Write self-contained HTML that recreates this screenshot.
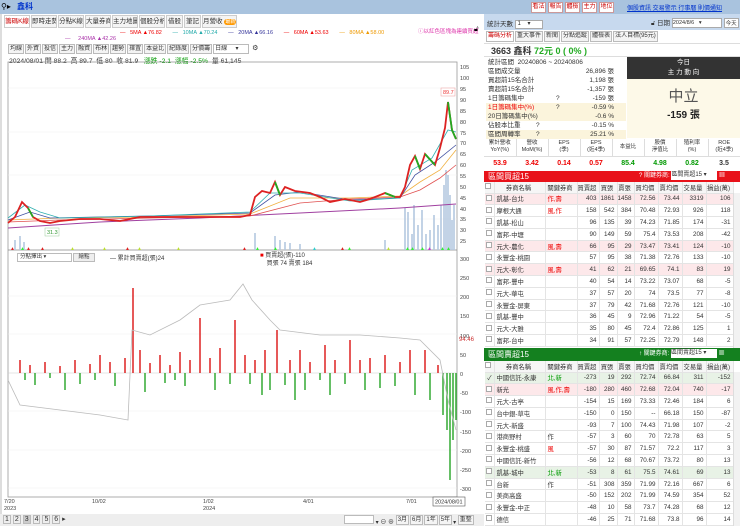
<!DOCTYPE html>
<html><head><meta charset="utf-8"><style>
*{margin:0;padding:0;box-sizing:border-box}
body{width:740px;height:526px;overflow:hidden;background:#fff;font-family:"Liberation Sans","Noto Sans CJK TC",sans-serif;font-size:7px;color:#333;position:relative;white-space:nowrap}
.a{position:absolute}
.tab{position:absolute;top:15px;height:13px;width:26px;overflow:hidden;border:1px solid #ccc;background:#f4f4f4;font-size:6.5px;line-height:11px;text-align:center}
.tb{display:inline-block;border:1px solid #bbb;background:#f4f4f4;padding:0 1px;height:10px;line-height:8px;font-size:6px;margin-right:1px;overflow:hidden;vertical-align:top}
.btn{position:absolute;top:2px;width:15px;border:1px solid #c99;background:#fff;color:#c00;height:11px;line-height:9px;font-size:6px;text-align:center;overflow:hidden}
table{border-collapse:collapse;table-layout:fixed}
.t td{height:11.8px;border-right:1px solid #e4e4e4;border-bottom:1px solid #e4e4e4;font-size:6.3px;text-align:right;padding-right:2px;white-space:nowrap;overflow:hidden}
.t td.l{text-align:left;padding-left:2px}
.t tr.h td{background:#f6f6f6;text-align:center;height:11px}
.t tr.p td{background:#fde8ea}
.t tr.g td{background:#e8f2e6}
.r{color:#e00}.gr{color:#090}
.cb{display:inline-block;width:6px;height:6px;border:1px solid #aaa;background:#fff}
.sr{position:absolute;left:486px;width:140px;height:9px;font-size:6.5px;line-height:9px;padding:0 2px;overflow:hidden}
.sr .q{position:absolute;left:70px}
.sr .v{position:absolute;right:12px}
</style></head><body>
<div class="a" style="left:0;top:0;width:740px;height:14px;background:#a9c3de"></div>
<div class="a" style="left:1px;top:2px;font-size:8px;color:#000">⚲▸</div>
<div class="a" style="left:17px;top:1px;font-size:8px;color:#0033cc;font-weight:bold">鑫科</div>
<div class="btn" style="left:531px">看法</div><div class="btn" style="left:548px">報告</div><div class="btn" style="left:565px">體檢</div><div class="btn" style="left:582px">主力</div><div class="btn" style="left:599px">地位</div>
<div class="a" style="left:627px;top:3px;font-size:6px;color:#0033cc;text-decoration:underline">個股資訊 交易警示 行事曆 則價通知</div>
<div class="a" style="left:0;top:14px;width:484px;height:512px;border-left:2px solid #ddd"></div>
<div class="tab" style="left:4px;color:#c00;background:#fff">籌碼K線</div>
<div class="tab" style="left:31px">即時走勢</div>
<div class="tab" style="left:58px">分點K線</div>
<div class="tab" style="left:85px">大量券商</div>
<div class="tab" style="left:112px">主力地圖</div>
<div class="tab" style="left:139px">個股分析</div>
<div class="tab" style="left:166px;width:17px">借股</div>
<div class="tab" style="left:184px;width:17px">筆記</div>
<div class="tab" style="left:202px;width:35px">月營收 <span style="background:#f90;color:#fff;border-radius:4px;padding:0 1px;font-size:5px">最新</span></div>
<div class="a" style="left:120px;top:30px;font-size:5.5px"><span class="r">— &nbsp; 5MA ▲76.82</span> &nbsp; &nbsp; &nbsp; <span style="color:#2aa">— &nbsp; 10MA ▲70.24</span> &nbsp; &nbsp; &nbsp; <span style="color:#339">— &nbsp; 20MA ▲66.16</span> &nbsp; &nbsp; &nbsp; <span class="r">— &nbsp; 60MA ▲53.63</span> &nbsp; &nbsp; &nbsp; <span style="color:#e90">— &nbsp; 80MA ▲58.00</span></div>
<div class="a" style="left:65px;top:36px;font-size:5.5px;color:#a3a">— &nbsp; &nbsp; 240MA ▲42.26</div>
<div class="a" style="left:418px;top:27px;font-size:5.5px;color:#d3a">ⓘ以紅色區塊為連續買超</div>
<div class="a" style="left:474px;top:26px;font-size:7px;color:#000">🔓︎</div>
<div class="a" style="left:8px;top:44px"><span class="tb">均線</span><span class="tb">外資</span><span class="tb">投信</span><span class="tb">主力</span><span class="tb">融資</span><span class="tb">布林</span><span class="tb">趨勢</span><span class="tb">擇置</span><span class="tb">本益比</span><span class="tb">紀錄度</span><span class="tb">分價籌</span><span class="tb" style="width:36px;background:#fff">日線 &nbsp; &nbsp; ▾</span> ⚙</div>
<div class="a" style="left:9px;top:55px;font-size:6.8px;color:#333">2024/08/01 開 88.2 &nbsp;高 89.7 &nbsp;低 80 &nbsp;收 81.9 &nbsp; <span class="gr">漲跌 -2.1 &nbsp;漲幅 -2.5%</span> &nbsp;量 61,145</div>
<svg class="a" style="left:0;top:0" width="484" height="526">
<rect x="8" y="62" width="449" height="435" fill="none" stroke="#999" stroke-width="0.8"/>
<line x1="8" y1="250" x2="457" y2="250" stroke="#888" stroke-width="0.8"/>
<g stroke="#f0f0f0" stroke-width="0.6">
<line x1="8" y1="88" x2="457" y2="88"/><line x1="8" y1="132" x2="457" y2="132"/><line x1="8" y1="175" x2="457" y2="175"/><line x1="8" y1="219" x2="457" y2="219"/>
<line x1="8" y1="296" x2="457" y2="296"/><line x1="8" y1="334" x2="457" y2="334"/><line x1="8" y1="373" x2="457" y2="373" stroke="#ccc"/><line x1="8" y1="411" x2="457" y2="411"/><line x1="8" y1="450" x2="457" y2="450"/><line x1="8" y1="488" x2="457" y2="488"/>
</g>
<g font-size="5.5" fill="#444">
<text x="460" y="69">105</text><text x="460" y="80">100</text><text x="460" y="91">95</text><text x="460" y="102">90</text><text x="460" y="113">85</text><text x="460" y="124">80</text><text x="460" y="135">75</text><text x="460" y="145">70</text><text x="460" y="156">65</text><text x="460" y="167">60</text><text x="460" y="178">55</text><text x="460" y="189">50</text><text x="460" y="200">45</text><text x="460" y="211">40</text><text x="460" y="221">35</text><text x="460" y="232">30</text><text x="460" y="243">25</text>
<text x="460" y="261">300</text><text x="460" y="280">250</text><text x="460" y="299">200</text><text x="460" y="318">150</text><text x="460" y="338">100</text><text x="460" y="357">50</text><text x="460" y="376">0</text><text x="460" y="395">-50</text><text x="460" y="414">-100</text><text x="460" y="434">-150</text><text x="460" y="453">-200</text><text x="460" y="472">-250</text><text x="460" y="491">-300</text>
</g>
<text x="459" y="341" font-size="6" fill="#c33">94.46</text>
<g stroke="#b4c8e0" stroke-width="1.6">
<path d="M15 250V240M20 250V236M24 250V242M255 250V233M275 250V236M280 250V240M285 250V242M290 250V243M300 250V244M385 250V240M405 250V208M408 250V212M412 250V234M414 250V205M418 250V225M422 250V210M426 250V234M430 250V230M434 250V215M438 250V225M441 250V205M444 250V185M446 250V170M448 250V175M450 250V195M452 250V220M454 250V205"/>
</g>
<path d="M8 228 L100 222 L200 218 L300 213 L400 208 L456 204" fill="none" stroke="#a040a0" stroke-width="1"/>
<path d="M8 222 L60 220 L150 218 L250 216 L300 203 L350 199 L400 197 L420 190 L440 178 L456 165" fill="none" stroke="#e05050" stroke-width="0.8"/>
<path d="M8 220 L60 218 L150 217 L250 214 L290 198 L350 198 L400 196 L420 182 L440 170 L456 150" fill="none" stroke="#f0b040" stroke-width="0.8"/>
<path d="M8 220 L30 212 L50 218 L150 216 L250 213 L275 195 L300 192 L350 200 L400 198 L415 175 L435 162 L456 145" fill="none" stroke="#4050a0" stroke-width="0.8"/>
<path d="M8 218 L25 205 L40 212 L60 218 L150 216 L250 212 L270 193 L300 193 L350 201 L400 198 L412 170 L432 158 L448 130 L456 132" fill="none" stroke="#30b0b0" stroke-width="0.8"/>
<path d="M8 223 L15 217 L22 202 L28 208 L33 217 L40 221 L50 223 L60 221 L80 219 L100 219 L120 221 L140 217 L160 217 L200 217 L240 217 L250 215 L255 197 L262 191 L270 193 L275 182 L280 195 L285 187 L295 191 L310 193 L320 197 L330 202 L345 199 L360 202 L370 199 L385 193 L395 197 L400 197 L405 187 L410 165 L415 156 L420 169 L425 154 L435 165 L440 148 L445 128 L448 102 L452 130 L456 139" fill="none" stroke="#d22" stroke-width="1.8"/>
<path d="M28 208 L33 217 M275 182 L280 195 M385 193 L395 197 M415 156 L420 169 M425 154 L435 165 M448 102 L452 130 L456 139" fill="none" stroke="#2a2" stroke-width="1.8"/>
<rect x="441" y="88" width="14" height="8" fill="#fff" stroke="#e99" stroke-width="0.5"/><text x="443" y="94" font-size="5.5" fill="#e33">89.7</text>
<rect x="45" y="228" width="14" height="8" fill="#fff" stroke="#9c9" stroke-width="0.5"/><text x="47" y="234" font-size="5.5" fill="#393">31.3</text>
<g font-size="5">
<text x="10" y="250" fill="#d22">▲</text><text x="20" y="250" fill="#3e3">▲</text><text x="26" y="250" fill="#d22">▲</text><text x="40" y="250" fill="#d22">▲</text><text x="70" y="250" fill="#bd3">▲</text><text x="102" y="250" fill="#bd3">▲</text><text x="125" y="250" fill="#d22">▲</text><text x="137" y="250" fill="#bd3">▲</text><text x="176" y="250" fill="#bd3">▲</text><text x="242" y="250" fill="#d22">▲</text><text x="255" y="250" fill="#3e3">▲</text><text x="273" y="250" fill="#3e3">▲</text><text x="312" y="250" fill="#3cc">▲</text><text x="340" y="250" fill="#d22">▲</text><text x="347" y="250" fill="#3e3">▲</text><text x="386" y="250" fill="#bd3">▲</text><text x="405" y="250" fill="#3e3">▲</text><text x="410" y="250" fill="#3e3">▲</text><text x="420" y="250" fill="#3e3">▲</text><text x="427" y="250" fill="#c3c">▲</text><text x="440" y="250" fill="#3e3">▲</text><text x="446" y="250" fill="#3e3">▲</text>
</g>
<path d="M20 373V360M30 373V365M45 373V362M60 373V366M75 373V360M90 373V364M100 373V355M110 373V362M125 373V358M133 373V288M140 373V350M150 373V363M160 373V355M170 373V365M180 373V352M190 373V360M200 373V318M210 373V358M220 373V348M235 373V320M245 373V355M255 373V360M265 373V350M277 373V330M290 373V360M300 373V350M310 373V362M325 373V345M335 373V360M350 373V340M360 373V360M370 373V358M385 373V355M400 373V362M410 373V350M425 373V350M438 373V365" stroke="#d22" stroke-width="1.5"/>
<path d="M25 373V380M35 373V385M50 373V378M65 373V390M80 373V384M95 373V380M115 373V386M145 373V392M165 373V383M175 373V380M185 373V386M215 373V390M230 373V384M250 373V384M262 373V395M270 373V390M285 373V385M295 373V400M305 373V390M320 373V380M330 373V395M345 373V384M365 373V390M380 373V388M395 373V386M415 373V395M430 373V400M443 373V415M447 373V430M450 373V480M453 373V440M456 373V420" stroke="#3a3" stroke-width="1.5"/>
<path d="M8 380 L20 405 L60 410 L100 415 L128 420 L132 330 L150 335 L180 320 L200 305 L230 300 L243 284 L252 300 L270 320 L280 330 L320 335 L360 335 L400 338 L420 340 L440 360 L448 400 L456 430" fill="none" stroke="#bbb" stroke-width="0.8"/>
<g font-size="5.5" fill="#444"><text x="4" y="503">7/20</text><text x="4" y="510">2023</text><text x="92" y="503">10/02</text><text x="203" y="503">1/02</text><text x="203" y="510">2024</text><text x="303" y="503">4/01</text><text x="406" y="503">7/01</text></g>
<rect x="433" y="497" width="32" height="9" fill="#fff" stroke="#555" stroke-width="0.6"/><text x="435" y="503.5" font-size="5.5" fill="#333">2024/08/01</text>
</svg>
<div class="a" style="left:17px;top:253px;width:55px;height:9px;border:1px solid #bbb;font-size:5.5px;line-height:7px;padding-left:2px">分點擇出 ▾</div>
<div class="a" style="left:73px;top:253px;width:22px;height:9px;border:1px solid #bbb;background:#eee;font-size:5.5px;line-height:7px;text-align:center">繪點</div>
<div class="a" style="left:110px;top:253px;font-size:6px">— 累計買賣超(張)24</div>
<div class="a" style="left:260px;top:252px;font-size:6px;line-height:8px"><span class="r">■</span> 買賣超(張)-110<br>&nbsp;&nbsp;&nbsp;&nbsp;買張 74 賣張 184</div>
<div class="a" style="left:0;top:514px;width:484px;height:12px;background:#eee"></div>
<div class="a" style="left:3px;top:515px;font-size:7px"><span style="border:1px solid #bbb;padding:0 1px">1</span> <span style="border:1px solid #bbb;padding:0 1px">2</span> <span style="border:1px solid #bbb;padding:0 1px;background:#ccc">3</span> <span style="border:1px solid #bbb;padding:0 1px">4</span> <span style="border:1px solid #bbb;padding:0 1px">5</span> <span style="border:1px solid #bbb;padding:0 1px">6</span> ▸</div>
<div class="a" style="left:344px;top:515px;font-size:6px"><span style="display:inline-block;width:30px;height:9px;border:1px solid #bbb;background:#fff"></span> ▾ ⊖ ⊕ <span class="tb">3月</span><span class="tb">6月</span><span class="tb">1年</span><span class="tb">5年</span>▾ <span class="tb">重整</span></div>
<!-- right panel -->
<div class="a" style="left:484px;top:14px;width:256px;height:16px;background:#c7d9ee"></div>
<div class="a" style="left:487px;top:18px;font-size:6.5px">統計天數 <span style="display:inline-block;width:28px;height:9px;background:#fff;border:1px solid #aaa;font-size:6px;line-height:7px;vertical-align:middle">&nbsp;1 &nbsp; &nbsp;▾</span></div>
<div class="a" style="left:651px;top:17px;font-size:6.5px">🔓︎ 日期 <span style="display:inline-block;width:50px;height:10px;background:#fff;border:1px solid #aaa;font-size:5.5px;line-height:8px;vertical-align:middle">2024/8/6 &nbsp; ▾</span> <span style="display:inline-block;border:1px solid #aaa;background:#fff;padding:0 1px;font-size:5.5px">今天</span></div>
<div class="a" style="left:486px;top:31px"><span class="tb" style="color:#c00;background:#fff;font-size:6px;height:11px">籌碼分析</span><span class="tb" style="font-size:6px;height:11px">重大事件</span><span class="tb" style="font-size:6px;height:11px">新聞</span><span class="tb" style="font-size:6px;height:11px">分點追蹤</span><span class="tb" style="font-size:6px;height:11px">體檢表</span><span class="tb" style="font-size:6px;height:11px">法人目標(95元)</span></div>
<div class="a" style="left:484px;top:43px;width:256px;height:14px;border-top:1px solid #ddd;border-bottom:1px solid #ddd"></div>
<div class="a" style="left:491px;top:44px;font-size:9px;font-weight:bold;color:#333">3663 鑫科 <span style="color:#2a2">72元 0 ( 0% )</span></div>
<div class="sr" style="top:58px">統計區間 &nbsp;20240806 ~ 20240806</div>
<div class="sr" style="top:67px">區間成交量<span class="v">26,896 張</span></div>
<div class="sr" style="top:76px">買超前15名合計<span class="v">1,198 張</span></div>
<div class="sr" style="top:85px">賣超前15名合計<span class="v">-1,357 張</span></div>
<div class="sr" style="top:94px">1日籌碼集中<span class="q">?</span><span class="v">-159 張</span></div>
<div class="sr" style="top:103px;background:#fbf4dc"><span class="r">1日籌碼集中(%)</span><span class="q">?</span><span class="v">-0.59 %</span></div>
<div class="sr" style="top:112px;background:#fbf4dc">20日籌碼集中(%)<span class="v">-0.6 %</span></div>
<div class="sr" style="top:121px">佔股本比重<span class="q" style="left:50px">?</span><span class="v">-0.15 %</span></div>
<div class="sr" style="top:130px;background:#fbf4dc">區間周轉率<span class="q" style="left:50px">?</span><span class="v">25.21 %</span></div>
<div class="a" style="left:627px;top:57px;width:113px;height:22px;background:#333;color:#fff;text-align:center;font-size:6.5px;line-height:10px;padding-top:1px">今日<br>主 力 動 向</div>
<div class="a" style="left:627px;top:79px;width:113px;height:59px;background:#fdf9e8;text-align:center"><div style="font-size:15px;color:#555;margin-top:6px">中立</div><div style="font-size:10px;font-weight:bold;color:#222">-159 張</div></div>
<table class="a" style="left:484px;top:139px;width:256px;font-size:5.5px;text-align:center">
<tr style="height:17px;border-bottom:1px solid #ddd;line-height:7px"><td style="border-right:1px solid #ddd">累計營收<br>YoY(%)</td><td style="border-right:1px solid #ddd">營收<br>MoM(%)</td><td style="border-right:1px solid #ddd">EPS<br>(季)</td><td style="border-right:1px solid #ddd">EPS<br>(近4季)</td><td style="border-right:1px solid #ddd">本益比</td><td style="border-right:1px solid #ddd">股價<br>淨值比</td><td style="border-right:1px solid #ddd">殖利率<br>(%)</td><td>ROE<br>(近4季)</td></tr>
<tr style="height:14px;font-size:7px;font-weight:bold"><td class="r">53.9</td><td class="r">3.42</td><td class="r">0.14</td><td class="r">0.57</td><td class="gr">85.4</td><td class="gr">4.98</td><td class="gr">0.82</td><td>3.5</td></tr>
</table>
<div class="a" style="left:484px;top:171px;width:256px;height:11px;background:#e8121a;color:#fff;font-size:8px;line-height:11px;padding-left:4px">區間買超15<span style="position:absolute;left:155px;font-size:6px">? 關鍵券商: <span style="display:inline-block;width:46px;height:9px;background:#fff;color:#333;line-height:8px;vertical-align:middle">區間賣超15 ▾</span> ▦</span></div>
<table class="a t" style="left:485px;top:182px;width:248px">
<colgroup><col style="width:9px"><col style="width:51px"><col style="width:32px"><col style="width:22px"><col style="width:18px"><col style="width:17px"><col style="width:24px"><col style="width:24px"><col style="width:24px"><col style="width:27px"></colgroup>
<tr class="h"><td><span class="cb"></span></td><td>券商名稱</td><td>關鍵券商</td><td>買賣超</td><td>買張</td><td>賣張</td><td>買均價</td><td>賣均價</td><td>交易量</td><td>損益(萬)</td></tr>
<tr class="p"><td><span class="cb"></span></td><td class="l">凱基-台北</td><td class="l r">作,壽</td><td>403</td><td>1861</td><td>1458</td><td>72.56</td><td>73.44</td><td>3319</td><td>106</td></tr>
<tr><td><span class="cb"></span></td><td class="l">摩根大通</td><td class="l r">風,作</td><td>158</td><td>542</td><td>384</td><td>70.48</td><td>72.93</td><td>926</td><td>118</td></tr>
<tr><td><span class="cb"></span></td><td class="l">凱基-松山</td><td></td><td>96</td><td>135</td><td>39</td><td>74.23</td><td>71.85</td><td>174</td><td>-31</td></tr>
<tr><td><span class="cb"></span></td><td class="l">富邦-中壢</td><td></td><td>90</td><td>149</td><td>59</td><td>75.4</td><td>73.53</td><td>208</td><td>-42</td></tr>
<tr class="p"><td><span class="cb"></span></td><td class="l">元大-農化</td><td class="l r">風,壽</td><td>66</td><td>95</td><td>29</td><td>73.47</td><td>73.41</td><td>124</td><td>-10</td></tr>
<tr><td><span class="cb"></span></td><td class="l">永豐金-桃園</td><td></td><td>57</td><td>95</td><td>38</td><td>71.38</td><td>72.76</td><td>133</td><td>-10</td></tr>
<tr class="p"><td><span class="cb"></span></td><td class="l">元大-彰化</td><td class="l r">風,壽</td><td>41</td><td>62</td><td>21</td><td>69.65</td><td>74.1</td><td>83</td><td>19</td></tr>
<tr><td><span class="cb"></span></td><td class="l">富邦-豐中</td><td></td><td>40</td><td>54</td><td>14</td><td>73.22</td><td>73.07</td><td>68</td><td>-5</td></tr>
<tr><td><span class="cb"></span></td><td class="l">元大-華屯</td><td></td><td>37</td><td>57</td><td>20</td><td>74</td><td>73.5</td><td>77</td><td>-8</td></tr>
<tr><td><span class="cb"></span></td><td class="l">永豐金-屏東</td><td></td><td>37</td><td>79</td><td>42</td><td>71.68</td><td>72.76</td><td>121</td><td>-10</td></tr>
<tr><td><span class="cb"></span></td><td class="l">凱基-豐中</td><td></td><td>36</td><td>45</td><td>9</td><td>72.96</td><td>71.22</td><td>54</td><td>-5</td></tr>
<tr><td><span class="cb"></span></td><td class="l">元大-大雅</td><td></td><td>35</td><td>80</td><td>45</td><td>72.4</td><td>72.86</td><td>125</td><td>1</td></tr>
<tr><td><span class="cb"></span></td><td class="l">富邦-台中</td><td></td><td>34</td><td>91</td><td>57</td><td>72.25</td><td>72.79</td><td>148</td><td>2</td></tr>
</table>
<div class="a" style="left:733px;top:193px;width:7px;height:155px;background:#f2f2f2;border-left:1px solid #ddd"></div>
<div class="a" style="left:484px;top:348px;width:256px;height:13px;background:#14801f;color:#fff;font-size:8px;line-height:13px;padding-left:4px">區間賣超15<span style="position:absolute;left:155px;font-size:6px">↑ 關鍵券商: <span style="display:inline-block;width:46px;height:9px;background:#fff;color:#333;line-height:8px;vertical-align:middle">區間賣超15 ▾</span> ▦</span></div>
<table class="a t" style="left:485px;top:361px;width:248px">
<colgroup><col style="width:9px"><col style="width:51px"><col style="width:32px"><col style="width:22px"><col style="width:18px"><col style="width:17px"><col style="width:24px"><col style="width:24px"><col style="width:24px"><col style="width:27px"></colgroup>
<tr class="h"><td><span class="cb"></span></td><td>券商名稱</td><td>關鍵券商</td><td>買賣超</td><td>買張</td><td>賣張</td><td>買均價</td><td>賣均價</td><td>交易量</td><td>損益(萬)</td></tr>
<tr class="g"><td>✓</td><td class="l">中國信託-永康</td><td class="l gr">北,新</td><td>-273</td><td>19</td><td>292</td><td>72.74</td><td>66.84</td><td>311</td><td>-152</td></tr>
<tr class="p"><td><span class="cb"></span></td><td class="l">新光</td><td class="l r">風,作,壽</td><td>-180</td><td>280</td><td>460</td><td>72.68</td><td>72.04</td><td>740</td><td>-17</td></tr>
<tr><td><span class="cb"></span></td><td class="l">元大-古亭</td><td></td><td>-154</td><td>15</td><td>169</td><td>73.33</td><td>72.46</td><td>184</td><td>6</td></tr>
<tr><td><span class="cb"></span></td><td class="l">台中銀-草屯</td><td></td><td>-150</td><td>0</td><td>150</td><td>--</td><td>66.18</td><td>150</td><td>-87</td></tr>
<tr><td><span class="cb"></span></td><td class="l">元大-新盛</td><td></td><td>-93</td><td>7</td><td>100</td><td>74.43</td><td>71.98</td><td>107</td><td>-2</td></tr>
<tr><td><span class="cb"></span></td><td class="l">港商野村</td><td class="l">作</td><td>-57</td><td>3</td><td>60</td><td>70</td><td>72.78</td><td>63</td><td>5</td></tr>
<tr><td><span class="cb"></span></td><td class="l">永豐金-桃盛</td><td class="l r">風</td><td>-57</td><td>30</td><td>87</td><td>71.57</td><td>72.2</td><td>117</td><td>3</td></tr>
<tr><td><span class="cb"></span></td><td class="l">中國信託-新竹</td><td></td><td>-56</td><td>12</td><td>68</td><td>70.67</td><td>73.72</td><td>80</td><td>13</td></tr>
<tr class="g"><td><span class="cb"></span></td><td class="l">凱基-城中</td><td class="l gr">北,新</td><td>-53</td><td>8</td><td>61</td><td>75.5</td><td>74.61</td><td>69</td><td>13</td></tr>
<tr><td><span class="cb"></span></td><td class="l">台新</td><td class="l">作</td><td>-51</td><td>308</td><td>359</td><td>71.99</td><td>72.16</td><td>667</td><td>6</td></tr>
<tr><td><span class="cb"></span></td><td class="l">美商高盛</td><td></td><td>-50</td><td>152</td><td>202</td><td>71.99</td><td>74.59</td><td>354</td><td>52</td></tr>
<tr><td><span class="cb"></span></td><td class="l">永豐金-中正</td><td></td><td>-48</td><td>10</td><td>58</td><td>73.7</td><td>74.28</td><td>68</td><td>12</td></tr>
<tr><td><span class="cb"></span></td><td class="l">德信</td><td></td><td>-46</td><td>25</td><td>71</td><td>71.68</td><td>73.8</td><td>96</td><td>14</td></tr>
</table>
<div class="a" style="left:733px;top:372px;width:7px;height:154px;background:#f2f2f2;border-left:1px solid #ddd"></div>
</body></html>
